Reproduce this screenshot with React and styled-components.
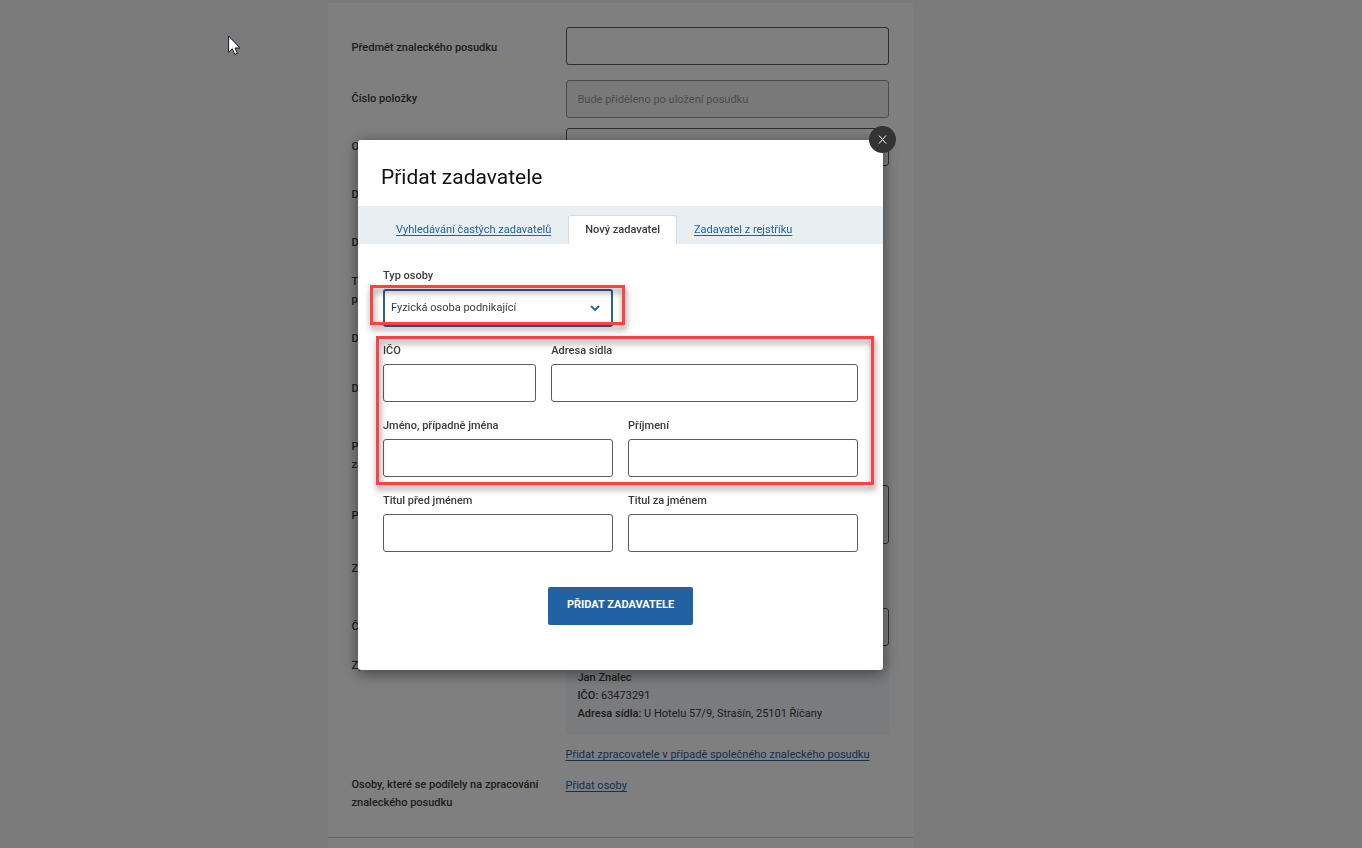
import * as React from 'react';
import styled, { createGlobalStyle, css } from 'styled-components';

const colors = {
  page: '#f4f4f4',
  text: '#3a3a3a',
  link: '#2362a2',
  bar: '#e9eef2',
  tabBorder: '#cfdde9',
  border: '#5c5c5c',
  mark: '#ff4141',
};

const GlobalStyle = createGlobalStyle`
  * {
    box-sizing: border-box;
  }

  body {
    margin: 0;
    background: ${colors.page};
    color: ${colors.text};
    font-family: Roboto, 'Liberation Sans', sans-serif;
    font-size: 11px;
    line-height: 18px;
  }

  input, select, textarea, button {
    font: inherit;
    color: inherit;
  }
`;

const Page = styled.main`
  display: flex;
  flex-direction: column;
  align-items: center;
  height: 100vh;
  overflow: hidden;
  padding: 3px 122px 0 0;
`;

const Panel = styled.form`
  flex: 1 0 auto;
  width: 100%;
  max-width: 585px;
  background: #fff;
`;

const Section = styled.div`
  padding: 24px 24px 25px;
  border-bottom: 1px solid #ccc;
`;

const Row = styled.div`
  display: grid;
  grid-template-columns: 199px 1fr;
  column-gap: 15px;
  align-items: start;
  min-height: ${({ $height }) => $height}px;
`;

const RowLabel = styled.label`
  padding-top: ${({ $top = 10 }) => $top}px;
  font-weight: 500;
`;

const control = css`
  display: block;
  width: 100%;
  height: 38px;
  padding: 0 11px;
  border: 1px solid ${colors.border};
  border-radius: 3px;
  background: #fff;
  outline: none;
`;

const Input = styled.input`
  ${control}

  &:disabled {
    background: #f2f2f2;
    border-color: #999;
  }

  &::placeholder {
    color: #999;
  }
`;

const TextArea = styled.textarea`
  ${control}
  height: 59px;
  resize: none;
`;

const Expert = styled.div`
  padding: 12px 12px 11px;
  background: #f3f6fa;

  p {
    margin: 0;
  }

  strong {
    font-weight: 500;
  }
`;

const Link = styled.a`
  color: ${colors.link};
  text-decoration: underline;
  text-underline-offset: 2px;
`;

const LinkLine = styled.div`
  padding-top: ${({ $top = 0 }) => $top}px;
`;

const Overlay = styled.div`
  position: fixed;
  inset: 0;
  display: flex;
  justify-content: center;
  align-items: flex-start;
  padding: 140px 121px 0 0;
  background: rgba(0, 0, 0, 0.5);
`;

const Dialog = styled.section`
  position: relative;
  width: 100%;
  max-width: 525px;
  padding-bottom: 45px;
  border-radius: 3px;
  background: #fff;
  box-shadow: 0 3px 15px rgba(0, 0, 0, 0.5);
`;

const DialogTitle = styled.h2`
  margin: 0;
  padding: 22px 23px 14px;
  font-size: 21px;
  font-weight: 400;
  line-height: 30px;
  color: #111;
`;

const CloseButton = styled.button`
  position: absolute;
  top: -14px;
  right: -13px;
  display: flex;
  align-items: center;
  justify-content: center;
  width: 27px;
  height: 27px;
  padding: 0;
  border: 0;
  border-radius: 50%;
  background: #333;
  color: #fff;
`;

const Tabs = styled.nav`
  display: flex;
  align-items: flex-end;
  gap: 1px;
  height: 38px;
  padding-left: 22px;
  background: ${colors.bar};
`;

const Tab = styled(Link)`
  height: 29px;
  padding: 6px 16px 0;

  ${({ $active }) =>
    $active &&
    css`
      border: 1px solid ${colors.tabBorder};
      border-bottom: 0;
      border-radius: 3px 3px 0 0;
      padding-top: 5px;
      background: #fff;
      color: ${colors.text};
      font-weight: 500;
      text-decoration: none;
    `}
`;

const DialogForm = styled.form`
  display: flex;
  flex-direction: column;
  gap: 15px;
  padding: 23px 25px 0;
`;

const FieldRow = styled.div`
  display: grid;
  grid-template-columns: ${({ $columns = '1fr 1fr' }) => $columns};
  gap: 15px;
`;

const FieldBox = styled.div`
  display: flex;
  flex-direction: column;
  gap: 4px;
`;

const FieldLabel = styled.label`
  font-weight: 500;
`;

const SelectWrap = styled.div`
  position: relative;

  svg {
    position: absolute;
    top: 16px;
    right: 13px;
    pointer-events: none;
  }
`;

const Select = styled.select`
  ${control}
  padding: 0 6px;
  border: 2px solid #315f91;
  appearance: none;
`;

const Marked = styled.div`
  position: relative;
  display: flex;
  flex-direction: column;
  gap: 15px;

  &::after {
    content: '';
    position: absolute;
    inset: ${({ $inset }) => $inset};
    border: 3px solid ${colors.mark};
    filter: drop-shadow(1px 4px 3px rgba(0, 0, 0, 0.5));
    pointer-events: none;
  }
`;

const SubmitButton = styled.button`
  align-self: center;
  height: 38px;
  margin-top: 20px;
  padding: 0 19px 2px;
  border: 0;
  border-radius: 2px;
  background: ${colors.link};
  color: #fff;
  font-weight: 700;
  text-transform: uppercase;
`;

const Pointer = styled.svg`
  position: fixed;
  top: 35px;
  left: 228px;
`;

const formRows = [
  { id: 'predmet', label: 'Předmět znaleckého posudku', height: 53, top: 12 },
  {
    id: 'cislo',
    label: 'Číslo položky',
    height: 48,
    disabled: true,
    placeholder: 'Bude přiděleno po uložení posudku',
  },
  { id: 'obor', label: 'Obor', height: 48 },
  { id: 'datum-zadani', label: 'Datum zadání', height: 48 },
  { id: 'datum-podani', label: 'Datum podání', height: 39 },
  { id: 'termin', label: ['Termín', 'podání'], height: 57 },
  { id: 'druh', label: 'Druh posudku', height: 50 },
  { id: 'duvod', label: 'Důvod zadání', height: 58 },
  { id: 'popis', label: ['Popis', 'zadání'], height: 57 },
  { id: 'poznamka', label: 'Poznámka', height: 65, multiline: true, top: 22 },
  { id: 'zadavatel', label: 'Zadavatel', height: 58 },
  { id: 'cislo-jednaci', label: 'Číslo jednací', height: 49 },
];

// fields of these rows are narrower than the column
const shortRows = [
  'datum-zadani',
  'datum-podani',
  'termin',
  'druh',
  'duvod',
  'popis',
  'zadavatel',
];

const ShortInput = styled(Input)`
  max-width: 150px;
`;

const FormRow = ({ id, label, height, multiline, top, ...rest }) => {
  const Control = multiline
    ? TextArea
    : shortRows.includes(id)
      ? ShortInput
      : Input;

  return (
    <Row $height={height}>
      <RowLabel htmlFor={id} $top={top}>
        {Array.isArray(label)
          ? label.map(line => <div key={line}>{line}</div>)
          : label}
      </RowLabel>
      <Control id={id} {...rest} />
    </Row>
  );
};

const Field = ({ id, label }) => (
  <FieldBox>
    <FieldLabel htmlFor={id}>{label}</FieldLabel>
    <Input id={id} type="text" />
  </FieldBox>
);

const PosudekForm = () => (
  <Panel>
    <Section>
      {formRows.map(row => (
        <FormRow key={row.id} {...row} />
      ))}
      <Row $height={119}>
        <RowLabel as="div" $top={0}>
          Zpracovatel
        </RowLabel>
        <div>
          <Expert>
            <p>
              <strong>Jan Znalec</strong>
            </p>
            <p>
              <strong>IČO:</strong> 63473291
            </p>
            <p>
              <strong>Adresa sídla:</strong> U Hotelu 57/9, Strašín, 25101
              Říčany
            </p>
          </Expert>
          <LinkLine $top={12}>
            <Link href="#zpracovatel">
              Přidat zpracovatele v případě společného znaleckého posudku
            </Link>
          </LinkLine>
        </div>
      </Row>
      <Row $height={36}>
        <RowLabel as="div" $top={0}>
          Osoby, které se podílely na zpracování znaleckého posudku
        </RowLabel>
        <LinkLine $top={1}>
          <Link href="#osoby">Přidat osoby</Link>
        </LinkLine>
      </Row>
    </Section>
  </Panel>
);

const ZadavatelDialog = () => (
  <Dialog role="dialog" aria-modal="true" aria-labelledby="dialog-title">
    <DialogTitle id="dialog-title">Přidat zadavatele</DialogTitle>
    <CloseButton type="button" aria-label="Zavřít">
      <svg width="9" height="9" viewBox="0 0 9 9">
        <path
          d="M1 .5l7 8M8 .5l-7 8"
          stroke="currentColor"
          strokeWidth="1"
          fill="none"
        />
      </svg>
    </CloseButton>
    <Tabs>
      <Tab href="#caste">Vyhledávání častých zadavatelů</Tab>
      <Tab href="#novy" $active>
        Nový zadavatel
      </Tab>
      <Tab href="#rejstrik">Zadavatel z rejstříku</Tab>
    </Tabs>
    <DialogForm>
      <FieldRow>
        <FieldBox>
          <FieldLabel htmlFor="typ">Typ osoby</FieldLabel>
          <Marked $inset="-4px -12px 2px -13px">
            <SelectWrap>
              <Select id="typ">
                <option>Fyzická osoba podnikající</option>
              </Select>
              <svg width="10" height="7" viewBox="0 0 10 7">
                <path
                  d="M1 1l4 4 4-4"
                  stroke={colors.link}
                  strokeWidth="1.8"
                  fill="none"
                />
              </svg>
            </SelectWrap>
          </Marked>
        </FieldBox>
      </FieldRow>
      <Marked $inset="-6px -16px -8px -7px">
        <FieldRow $columns="1fr 2fr">
          <Field id="ico" label="IČO" />
          <Field id="adresa" label="Adresa sídla" />
        </FieldRow>
        <FieldRow>
          <Field id="jmeno" label="Jméno, případně jména" />
          <Field id="prijmeni" label="Příjmení" />
        </FieldRow>
      </Marked>
      <FieldRow>
        <Field id="titul-pred" label="Titul před jménem" />
        <Field id="titul-za" label="Titul za jménem" />
      </FieldRow>
      <SubmitButton type="button">Přidat zadavatele</SubmitButton>
    </DialogForm>
  </Dialog>
);

const App = () => (
  <>
    <GlobalStyle />
    <Page>
      <PosudekForm />
    </Page>
    <Overlay>
      <ZadavatelDialog />
    </Overlay>
    <Pointer width="13" height="20" viewBox="0 0 13 20" aria-hidden="true">
      <path
        d="M.6 1v16.2l3.7-3.4 2.5 5.6 2.6-1.1-2.4-5.3h5z"
        fill="#fff"
        stroke="#111827"
        strokeWidth="1"
      />
    </Pointer>
  </>
);

export default App;
